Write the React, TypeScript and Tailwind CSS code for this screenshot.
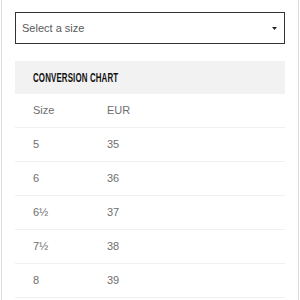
import React from "react";

const rows: [string, string][] = [
  ["5", "35"],
  ["6", "36"],
  ["6½", "37"],
  ["7½", "38"],
  ["8", "39"],
];

export default function App() {
  return (
    <div className="w-[300px] h-[300px] bg-white overflow-hidden" style={{ fontFamily: '"Liberation Sans", Arial, sans-serif' }}>
      <div className="mx-[1px] h-full border-x border-[#dcdcdc] px-[13px] pt-[12px]">
        <div className="h-[32px] border border-[#333] flex items-center justify-between pl-[6px] pr-[7px]">
          <span className="text-[11px] text-[#5a5a5a]">Select a size</span>
          <svg width="5" height="3" viewBox="0 0 5 3"><path d="M0 0h5L2.5 3z" fill="#222" /></svg>
        </div>
        <div className="mt-[17px] h-[33px] bg-[#f2f2f2] flex items-center pl-[18px]">
          <span className="text-[12px] font-bold text-[#111] tracking-[0.2px] origin-left scale-x-[0.66] inline-block whitespace-nowrap">CONVERSION CHART</span>
        </div>
        <div className="text-[11px] text-[#6e6e6e]">
          <div className="h-[34px] flex items-center border-b border-[#f0f0f0]">
            <span className="w-[92px] pl-[18px]">Size</span>
            <span>EUR</span>
          </div>
          {rows.map(([s, e]) => (
            <div key={s} className="h-[34px] flex items-center border-b border-[#f0f0f0]">
              <span className="w-[92px] pl-[18px]">{s}</span>
              <span>{e}</span>
            </div>
          ))}
        </div>
      </div>
    </div>
  );
}
